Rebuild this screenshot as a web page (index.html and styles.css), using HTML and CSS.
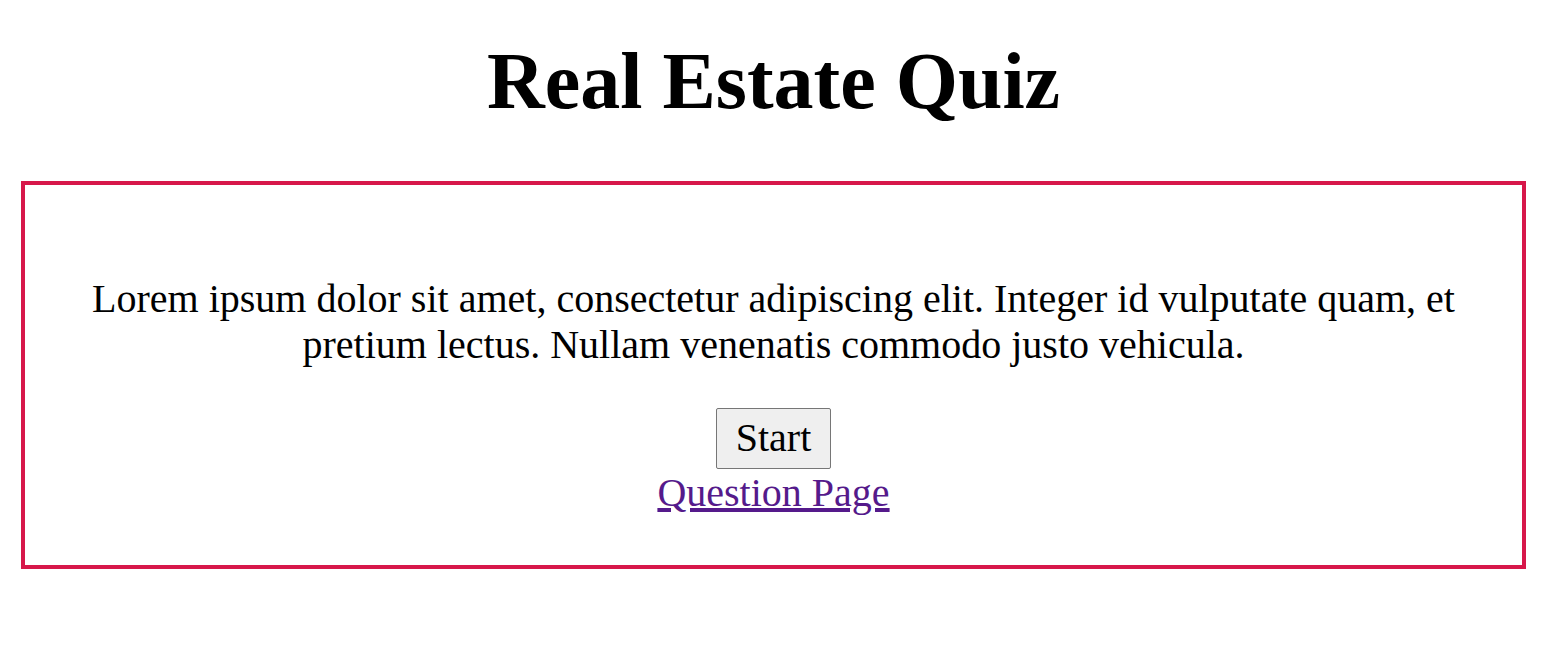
FILE: index.html
```html
<!DOCTYPE html>
<html>
<head>
<meta charset="utf-8">
<link rel="stylesheet" href="styles.css">
</head>
<body>
<h1 class="title">Real Estate Quiz</h1>
<div class="card">
  <p class="intro">Lorem ipsum dolor sit amet, consectetur adipiscing elit. Integer id vulputate quam, et pretium lectus. Nullam venenatis commodo justo vehicula.</p>
  <div class="actions">
    <button class="start">Start</button>
    <a class="link" href="#">Question Page</a>
  </div>
</div>
</body>
</html>
```
FILE: styles.css
```css
html, body {
  margin: 0;
  padding: 0;
  background: #fff;
}
body {
  font-family: "Liberation Serif", "Times New Roman", serif;
  font-size: 40px;
  color: #000;
  padding: 0 17px 0 21px;
}
.title {
  font-size: 80px;
  font-weight: bold;
  text-align: center;
  margin: 35px 0 0;
  line-height: 92px;
}
.card {
  margin-top: 54px;
  border: 4px solid #d7174a;
  box-sizing: border-box;
  height: 388px;
  padding: 50px 20px;
  text-align: center;
}
.intro {
  font-size: 40px;
  margin: 40.5px 0 40px;
  line-height: 46px;
}
.actions {
  display: flex;
  flex-direction: column;
  align-items: center;
}
.start {
  font-family: "Liberation Serif", "Times New Roman", serif;
  font-size: 40px;
  padding: 0;
  background: #efefef;
  border: 1px solid #767676;
  border-radius: 2px;
  color: #000;
  height: 61px;
  width: 115px;
  line-height: 46px;
}
.link {
  font-size: 40px;
  color: #551a8b;
  line-height: 46px;
  margin-top: 1px;
}
```
